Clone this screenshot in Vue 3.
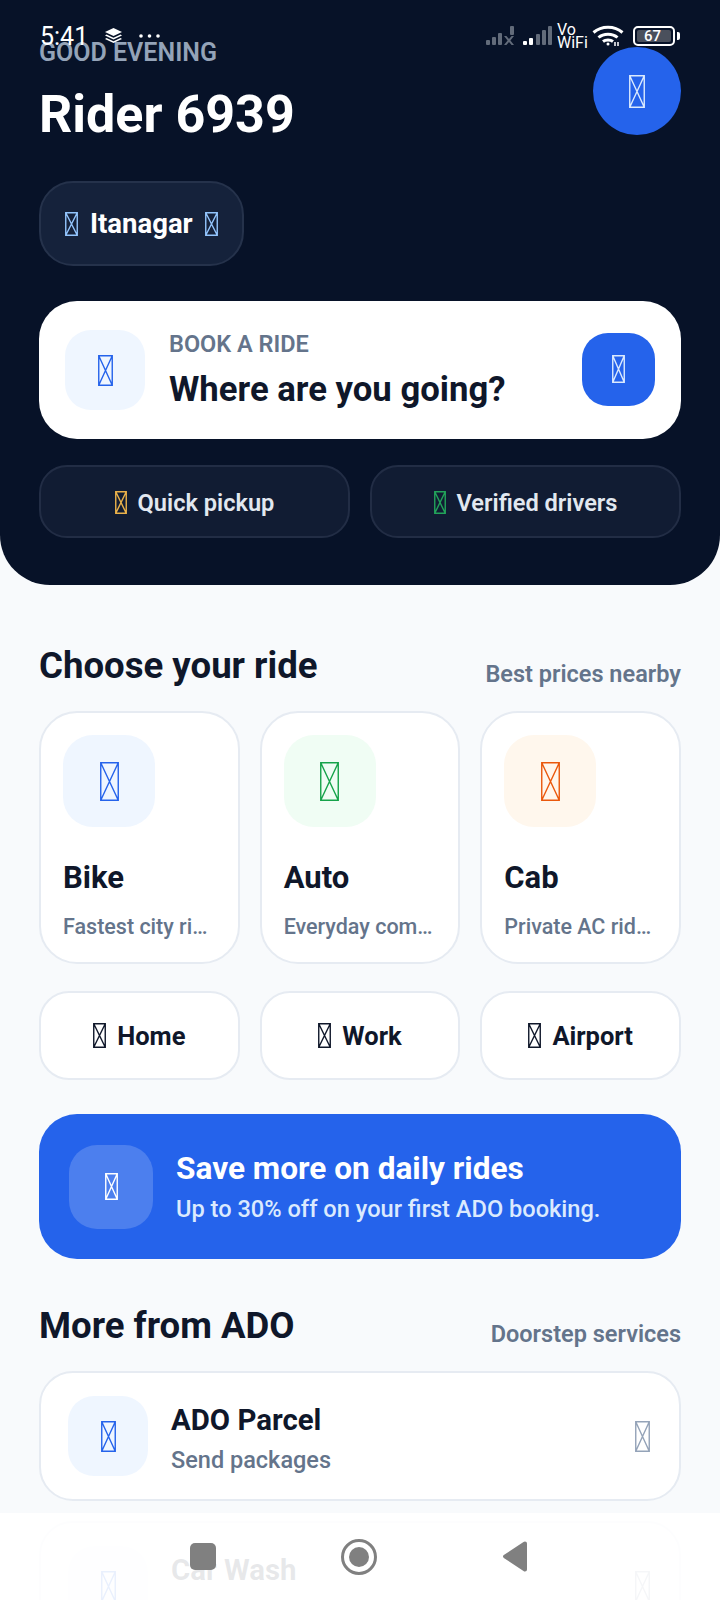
<template>
  <div class="screen">
    <header class="hero">
      <div class="hero-top">
        <div>
          <div class="greeting">GOOD EVENING</div>
          <div class="rider">Rider 6939</div>
        </div>
        <div class="avatar"><Tofu :w="16" :h="33" /></div>
      </div>

      <div class="location">
        <Tofu class="c-sky" :w="13" :h="24" />
        <span>Itanagar</span>
        <Tofu class="c-sky" :w="13" :h="24" />
      </div>

      <div class="search">
        <div class="search-icon"><Tofu :w="15" :h="31" /></div>
        <div class="search-text">
          <div class="search-label">BOOK A RIDE</div>
          <div class="search-title">Where are you going?</div>
        </div>
        <div class="search-go"><Tofu :w="13" :h="28" /></div>
      </div>

      <div class="chips">
        <div v-for="chip in chips" :key="chip.label" class="chip">
          <Tofu :class="chip.color" :w="12" :h="23" />
          <span>{{ chip.label }}</span>
        </div>
      </div>
    </header>

    <main class="content">
      <div class="section-head">
        <h2>Choose your ride</h2>
        <span>Best prices nearby</span>
      </div>

      <div class="rides">
        <div v-for="ride in rides" :key="ride.name" class="ride">
          <div class="ride-icon" :class="ride.tone"><Tofu :w="19" :h="39" /></div>
          <div class="ride-name">{{ ride.name }}</div>
          <div class="ride-sub">{{ ride.sub }}</div>
        </div>
      </div>

      <div class="places">
        <div v-for="place in places" :key="place" class="place">
          <Tofu :w="13" :h="25" />
          <span>{{ place }}</span>
        </div>
      </div>

      <div class="promo">
        <div class="promo-icon"><Tofu :w="13" :h="27" /></div>
        <div>
          <div class="promo-title">Save more on daily rides</div>
          <div class="promo-sub">Up to 30% off on your first ADO booking.</div>
        </div>
      </div>

      <div class="section-head more-head">
        <h2>More from ADO</h2>
        <span>Doorstep services</span>
      </div>

      <div class="services">
        <div v-for="service in services" :key="service.name" class="service">
          <div class="service-icon"><Tofu :w="15" :h="31" /></div>
          <div class="service-text">
            <div class="service-name">{{ service.name }}</div>
            <div class="service-sub">{{ service.sub }}</div>
          </div>
          <Tofu class="c-slate" :w="15" :h="31" />
        </div>
      </div>
    </main>

    <!-- system status bar, drawn over the app -->
    <div class="statusbar">
      <div class="status-left">
        <span class="clock">5:41</span>
        <svg width="17" height="15" viewBox="0 0 17 15" fill="#fff">
          <path d="M8.5 0 17 4 8.5 8 0 4z" />
          <path d="M1.5 6.4 8.5 9.7l7-3.3L17 7.5 8.5 11.5 0 7.5z" />
          <path d="M1.5 9.9 8.5 13.2l7-3.3L17 11 8.5 15 0 11z" />
        </svg>
        <svg width="21" height="4" viewBox="0 0 21 4" fill="#fff">
          <circle cx="2" cy="2" r="1.8" />
          <circle cx="10.5" cy="2" r="1.8" />
          <circle cx="19" cy="2" r="1.8" />
        </svg>
      </div>
      <div class="status-right">
        <svg class="sim-one" width="29" height="19" viewBox="0 0 29 19" fill="#626b7a">
          <rect x="0" y="14" width="4" height="5" rx="1" />
          <rect x="6" y="11" width="4" height="8" rx="1" />
          <rect x="12" y="7" width="4" height="12" rx="1" />
          <rect x="24" y="0" width="4" height="9" rx="1" />
          <path d="M18 10h2.4l2.6 3 2.6-3H28l-3.6 4.4L28 19h-2.4L23 15.9 20.4 19H18l3.6-4.6z" />
        </svg>
        <svg width="30" height="19" viewBox="0 0 30 19">
          <g fill="#fff">
            <rect x="0" y="15" width="4" height="4" rx="1" />
            <rect x="6" y="12" width="4" height="7" rx="1" />
          </g>
          <g fill="#626b7a">
            <rect x="13" y="8" width="4" height="11" rx="1" />
            <rect x="19" y="4" width="4" height="15" rx="1" />
            <rect x="25" y="0" width="4" height="19" rx="1" />
          </g>
        </svg>
        <div class="vowifi">Vo<br />WiFi</div>
        <svg width="32" height="21" viewBox="0 0 32 21" fill="none" stroke="#fff" stroke-width="3">
          <path d="M1.5 7.5C9.5 .5 22.5 .5 30.5 7.5" />
          <path d="M6.5 12.5C11.5 8 20.5 8 25.5 12.5" />
          <path d="M11 16.5C13.5 14.5 18.5 14.5 21 16.5" />
          <circle cx="16" cy="19" r="1.5" fill="#fff" stroke="none" />
          <path d="M23 21v-4M26 21v-4" stroke-width="1.5" />
        </svg>
        <div class="battery">
          <div class="battery-body"><span class="battery-fill">67</span></div>
          <div class="battery-nub"></div>
        </div>
      </div>
    </div>

    <!-- system navigation bar, content shows faintly through it -->
    <div class="navbar">
      <div class="nav-square"></div>
      <div class="nav-circle"><div></div></div>
      <svg width="24" height="31" viewBox="0 0 24 31" fill="#808080">
        <path d="M22 .5a2 2 0 0 1 2 2v26a2 2 0 0 1-2 2 2 2 0 0 1-1.5-.6L.8 17a2 2 0 0 1 0-3L20.5 1.1A2 2 0 0 1 22 .5z" />
      </svg>
    </div>
  </div>
</template>

<script setup>
import { h } from "vue";

// Missing-glyph box, the reference shows these where its icon font failed
const Tofu = (props) =>
  h(
    "svg",
    {
      class: "tofu",
      width: props.w,
      height: props.h,
      viewBox: `0 0 ${props.w} ${props.h}`,
      fill: "none",
      stroke: "currentColor",
    },
    h("path", {
      d: `M.75.75H${props.w - 0.75}V${props.h - 0.75}H.75ZM.75.75 ${props.w - 0.75} ${props.h - 0.75}M${props.w - 0.75}.75 .75 ${props.h - 0.75}`,
      "stroke-width": 1.4,
    })
  );
Tofu.props = ["w", "h"];

const chips = [
  { label: "Quick pickup", color: "c-amber" },
  { label: "Verified drivers", color: "c-green" },
];

const rides = [
  { name: "Bike", sub: "Fastest city rides", tone: "tone-blue" },
  { name: "Auto", sub: "Everyday commute", tone: "tone-green" },
  { name: "Cab", sub: "Private AC rides", tone: "tone-orange" },
];

const places = ["Home", "Work", "Airport"];

const services = [
  { name: "ADO Parcel", sub: "Send packages" },
  { name: "Car Wash", sub: "At your doorstep" },
];
</script>

<style>
html,
body {
  margin: 0;
  background: #f8fafc;
}
</style>

<style scoped>
.screen {
  position: relative;
  width: 720px;
  height: 1600px;
  overflow: hidden;
  background: #f8fafc;
  font-family: Roboto, "Liberation Sans", sans-serif;
  color: #0f172a;
}

.tofu {
  display: block;
  flex: none;
}

.c-sky {
  color: #93c5fd;
}
.c-amber {
  color: #eab14a;
}
.c-green {
  color: #22a35a;
}
.c-slate {
  color: #94a3b8;
}

/* Dark header */
.hero {
  box-sizing: border-box;
  height: 585px;
  padding: 42px 39px 0;
  background: #071228;
  border-radius: 0 0 50px 50px;
}

.hero-top {
  display: flex;
  justify-content: space-between;
  align-items: center;
  height: 100px;
}

.greeting {
  font-size: 25px;
  line-height: 24px;
  font-weight: 600;
  color: #94a3b8;
}

.rider {
  margin-top: 22px;
  font-size: 52px;
  line-height: 56px;
  font-weight: 700;
  color: #fff;
}

.avatar {
  display: flex;
  align-items: center;
  justify-content: center;
  width: 88px;
  height: 88px;
  margin-top: -2px;
  border-radius: 50%;
  background: #2563eb;
  color: #dbeafe;
}

.location {
  display: inline-flex;
  align-items: center;
  gap: 12px;
  box-sizing: border-box;
  height: 85px;
  margin-top: 39px;
  padding: 0 24px;
  border: 2px solid #25324b;
  border-radius: 34px;
  background: #15223b;
  font-size: 27.5px;
  font-weight: 700;
  color: #fff;
}

.search {
  display: flex;
  align-items: center;
  box-sizing: border-box;
  height: 138px;
  margin-top: 35px;
  padding: 0 26px;
  border-radius: 38px;
  background: #fff;
}

.search-icon {
  display: flex;
  align-items: center;
  justify-content: center;
  width: 80px;
  height: 80px;
  border-radius: 26px;
  background: #eff6ff;
  color: #2563eb;
}

.search-text {
  flex: 1;
  margin-left: 24px;
}

.search-label {
  font-size: 23.5px;
  line-height: 28px;
  font-weight: 600;
  color: #64748b;
}

.search-title {
  margin-top: 10px;
  font-size: 34.7px;
  line-height: 42px;
  font-weight: 700;
  color: #0f172a;
}

.search-go {
  display: flex;
  align-items: center;
  justify-content: center;
  width: 73px;
  height: 73px;
  margin-top: -2px;
  border-radius: 26px;
  background: #2563eb;
  color: #dbeafe;
}

.chips {
  display: flex;
  gap: 20px;
  margin-top: 26px;
}

.chip {
  flex: 1;
  display: flex;
  align-items: center;
  justify-content: center;
  gap: 11px;
  box-sizing: border-box;
  height: 73px;
  padding-top: 2px;
  border: 2px solid #222d45;
  border-radius: 28px;
  background: #111c33;
  font-size: 23.6px;
  font-weight: 600;
  color: #e2e8f0;
}

/* Light content */
.content {
  padding: 61px 39px 0;
}

.section-head {
  display: flex;
  justify-content: space-between;
  align-items: flex-end;
}

.section-head h2 {
  margin: 0;
  font-size: 36.6px;
  line-height: 40px;
  font-weight: 700;
  color: #0f172a;
}

.section-head span {
  font-size: 23.5px;
  line-height: 24px;
  font-weight: 600;
  color: #64748b;
}

.rides {
  display: grid;
  grid-template-columns: repeat(3, 1fr);
  gap: 20px;
  margin-top: 25px;
}

.ride {
  box-sizing: border-box;
  min-width: 0;
  height: 253px;
  padding: 22px 22px 0;
  border: 2px solid #e6ebf2;
  border-radius: 38px;
  background: #fff;
}

.ride-icon {
  display: flex;
  align-items: center;
  justify-content: center;
  width: 92px;
  height: 92px;
  border-radius: 30px;
}

.tone-blue {
  background: #eff6ff;
  color: #2563eb;
}
.tone-green {
  background: #f0fdf4;
  color: #16a34a;
}
.tone-orange {
  background: #fff7ed;
  color: #ea580c;
}

.ride-name {
  margin-top: 31px;
  font-size: 31px;
  line-height: 40px;
  font-weight: 700;
  color: #0f172a;
}

.ride-sub {
  margin-top: 14px;
  overflow: hidden;
  font-size: 21.5px;
  line-height: 30px;
  font-weight: 500;
  color: #64748b;
  white-space: nowrap;
  text-overflow: ellipsis;
}

.places {
  display: grid;
  grid-template-columns: repeat(3, 1fr);
  gap: 20px;
  margin-top: 27px;
}

.place {
  display: flex;
  align-items: center;
  justify-content: center;
  gap: 11px;
  box-sizing: border-box;
  height: 89px;
  border: 2px solid #e6ebf2;
  border-radius: 30px;
  background: #fff;
  font-size: 25.5px;
  font-weight: 700;
  color: #0f172a;
}

.promo {
  display: flex;
  align-items: center;
  gap: 23px;
  box-sizing: border-box;
  height: 145px;
  margin-top: 34px;
  padding: 0 30px;
  border-radius: 38px;
  background: #2563eb;
}

.promo-icon {
  display: flex;
  align-items: center;
  justify-content: center;
  width: 84px;
  height: 84px;
  border-radius: 28px;
  background: rgba(255, 255, 255, 0.18);
  color: #fff;
}

.promo-title {
  font-size: 31.6px;
  line-height: 40px;
  font-weight: 700;
  color: #fff;
}

.promo-sub {
  margin-top: 5px;
  font-size: 23.6px;
  line-height: 30px;
  font-weight: 500;
  color: #dbeafe;
}

.more-head {
  margin-top: 47px;
}

.services {
  display: flex;
  flex-direction: column;
  gap: 20px;
  margin-top: 25px;
}

.service {
  display: flex;
  align-items: center;
  box-sizing: border-box;
  height: 130px;
  padding: 0 29px 0 27px;
  border: 2px solid #e6ebf2;
  border-radius: 34px;
  background: #fff;
}

.service-icon {
  display: flex;
  align-items: center;
  justify-content: center;
  width: 80px;
  height: 80px;
  border-radius: 26px;
  background: #eff6ff;
  color: #2563eb;
}

.service-text {
  flex: 1;
  margin-left: 23px;
  padding-top: 4px;
}

.service-name {
  font-size: 29.4px;
  line-height: 38px;
  font-weight: 700;
  color: #0f172a;
}

.service-sub {
  margin-top: 6px;
  font-size: 23.5px;
  line-height: 30px;
  font-weight: 500;
  color: #64748b;
}

/* Status bar */
.statusbar {
  position: absolute;
  top: 23px;
  left: 40px;
  right: 40px;
  display: flex;
  justify-content: space-between;
  align-items: center;
  height: 25px;
}

.status-left {
  display: flex;
  align-items: center;
  gap: 17px;
  color: #fff;
}

.clock {
  margin-top: 2px;
  font-size: 25px;
  line-height: 25px;
  font-weight: 400;
}

.status-right {
  display: flex;
  align-items: center;
  gap: 5px;
}

.sim-one {
  margin-right: 3px;
}

.vowifi {
  width: 30px;
  margin-left: -1px;
  font-size: 16px;
  line-height: 13px;
  font-weight: 400;
  color: #fff;
}

.battery {
  display: flex;
  align-items: center;
  gap: 2px;
  margin-left: 4px;
}

.battery-body {
  box-sizing: border-box;
  width: 42px;
  height: 20px;
  padding: 2px;
  border: 2px solid #fff;
  border-radius: 5px;
}

.battery-fill {
  display: block;
  width: 27px;
  height: 12px;
  padding-left: 7px;
  border-radius: 2px;
  background: #4a505c;
  font-size: 15px;
  line-height: 12px;
  font-weight: 500;
  color: #fff;
}

.battery-nub {
  width: 3px;
  height: 8px;
  border-radius: 0 2px 2px 0;
  background: #fff;
}

/* Navigation bar */
.navbar {
  position: absolute;
  left: 0;
  right: 0;
  bottom: 0;
  height: 87px;
  background: rgba(255, 255, 255, 0.9);
}

.navbar > * {
  position: absolute;
}

.nav-square {
  left: 190px;
  top: 30px;
  width: 26px;
  height: 27px;
  border-radius: 5px;
  background: #808080;
}

.nav-circle {
  left: 341px;
  top: 26px;
  display: flex;
  align-items: center;
  justify-content: center;
  box-sizing: border-box;
  width: 36px;
  height: 36px;
  border: 3px solid #808080;
  border-radius: 50%;
}

.nav-circle div {
  width: 20px;
  height: 20px;
  border-radius: 50%;
  background: #808080;
}

.navbar svg {
  left: 503px;
  top: 28px;
}
</style>
